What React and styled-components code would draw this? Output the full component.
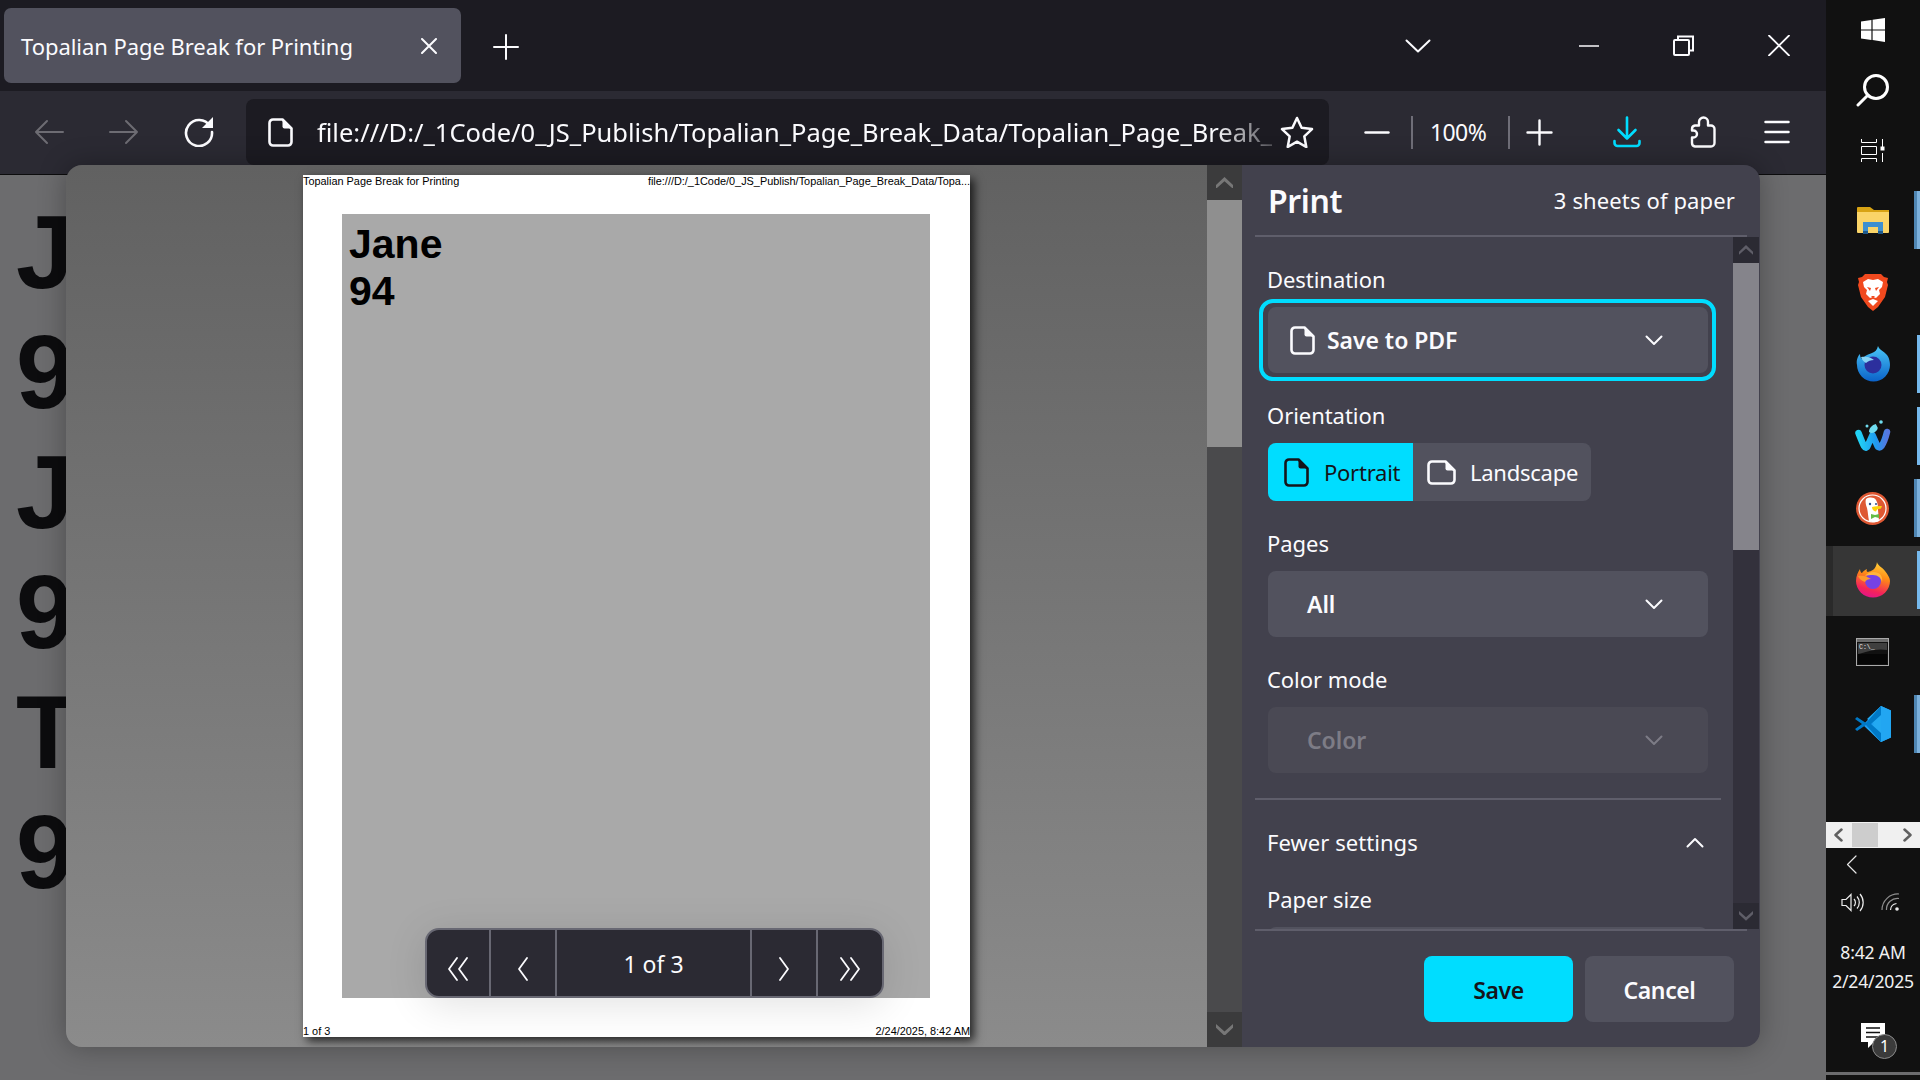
import React from "react";
import styled, { createGlobalStyle } from "styled-components";

const GlobalStyle = createGlobalStyle`
  html, body {
    margin: 0;
    width: 1920px;
    height: 1080px;
    overflow: hidden;
    background: #111111;
    font-family: "Noto Sans", "Open Sans", sans-serif;
  }
  * { box-sizing: border-box; }
  svg { display: block; flex: none; }
`;

const Screen = styled.div`
  width: 1920px;
  height: 1080px;
  display: flex;
`;

const Browser = styled.div`
  width: 1826px;
  display: flex;
  flex-direction: column;
`;

// tab strip
const TabBar = styled.div`
  height: 91px;
  background: #1c1b22;
  display: flex;
  align-items: center;
  padding-left: 4px;
`;

const Tab = styled.div`
  width: 457px;
  height: 75px;
  padding: 0 24px 0 17px;
  background: #52525e;
  border-radius: 7px;
  display: flex;
  align-items: center;
  justify-content: space-between;
  color: #fbfbfe;
  font-size: 22px;
  letter-spacing: -0.05px;
`;

const NewTab = styled.div`
  margin: 2px 0 0 32px;
`;

const WindowControls = styled.div`
  margin-left: auto;
  display: flex;
  align-items: center;
`;

const WindowButton = styled.div`
  width: 95px;
  display: flex;
  justify-content: center;
  margin-right: ${(p) => p.$gap || 0}px;
`;

// address bar row
const Toolbar = styled.div`
  height: 84px;
  background: #2b2a33;
  border-bottom: 1px solid #0c0c0d;
  display: flex;
  align-items: flex-start;
  padding: 8px 0 0 11px;
`;

const NavButton = styled.div`
  width: 75px;
  height: 66px;
  display: flex;
  align-items: center;
  justify-content: center;
`;

const UrlBar = styled.div`
  width: 1083px;
  height: 66px;
  margin-left: 10px;
  padding: 0 15px 0 22px;
  background: #1c1b22;
  border-radius: 8px;
  display: flex;
  align-items: center;
  color: #fbfbfe;
`;

const UrlText = styled.div`
  margin-left: 24px;
  font-size: 25.5px;
  white-space: nowrap;
  -webkit-mask-image: linear-gradient(to right, #000 94%, rgba(0, 0, 0, 0.25) 100%);
  mask-image: linear-gradient(to right, #000 94%, rgba(0, 0, 0, 0.25) 100%);
`;

const ToolItem = styled.div`
  height: 66px;
  margin-left: ${(p) => p.$gap}px;
  display: flex;
  align-items: center;
`;

const ZoomDivider = styled.div`
  width: 2px;
  height: 33px;
  margin-left: ${(p) => p.$gap}px;
  margin-top: 17px;
  background: #6f6e78;
`;

const ZoomValue = styled.div`
  width: 58px;
  margin-left: 17px;
  line-height: 66px;
  color: #fbfbfe;
  font-size: 23px;
  letter-spacing: -0.6px;
  white-space: nowrap;
`;

// page behind the print dialog
const Content = styled.div`
  position: relative;
  flex: 1;
  background: #6c6c6e;
  padding: 17px 0 0 16px;
`;

const BehindLine = styled.div`
  font: bold 104px/120px "Liberation Sans", Arial, sans-serif;
  color: #0c0c0e;
`;

const Dialog = styled.div`
  position: absolute;
  left: 66px;
  top: -10px;
  width: 1694px;
  height: 882px;
  border-radius: 16px;
  overflow: hidden;
  display: flex;
  box-shadow: 0 0 28px rgba(0, 0, 0, 0.3);
`;

const Preview = styled.div`
  position: relative;
  width: 1141px;
  padding: 10px 0 0 237px;
  background: linear-gradient(to bottom, #616161, #8b8b8b);
`;

const Sheet = styled.div`
  width: 667px;
  height: 862px;
  background: #ffffff;
  display: flex;
  flex-direction: column;
  box-shadow: 4px 4px 9px rgba(0, 0, 0, 0.75);
  font-family: "Liberation Sans", Arial, sans-serif;
  color: #000000;
`;

const SheetHead = styled.div`
  height: 39px;
  display: flex;
  justify-content: space-between;
  font-size: 10.9px;
  line-height: 12px;
`;

const SheetFoot = styled(SheetHead)`
  align-items: flex-end;
`;

const SheetBody = styled.div`
  width: 588px;
  height: 784px;
  margin-left: 39px;
  padding: 7px 0 0 7px;
  background: #a9a9a9;
  font-size: 41px;
  line-height: 47px;
  font-weight: bold;
`;

const Pager = styled.div`
  position: absolute;
  left: 359px;
  bottom: 49px;
  width: 459px;
  height: 70px;
  display: grid;
  grid-template-columns: 64px 66px 195px 66px 1fr;
  background: #2b2a33;
  border: 2px solid #686873;
  border-radius: 14px;
  box-shadow: 0 6px 40px rgba(0, 0, 0, 0.12);
  color: #fbfbfe;
`;

const PagerCell = styled.div`
  display: flex;
  align-items: center;
  justify-content: center;
  padding-top: ${(p) => (p.$label ? 2 : 12)}px;
  font-size: 23px;
  border-right: ${(p) => (p.$last ? "none" : "2px solid #686873")};
`;

const Track = styled.div`
  width: ${(p) => p.$width}px;
  display: flex;
  flex-direction: column;
  background: ${(p) => p.$track};
`;

const TrackButton = styled.div`
  height: ${(p) => p.$height}px;
  background: ${(p) => p.$bg};
  display: flex;
  align-items: center;
  justify-content: center;
`;

const TrackThumb = styled.div`
  height: ${(p) => p.$height}px;
  background: ${(p) => p.$bg};
`;

const TrackFill = styled.div`
  flex: 1;
`;

// settings panel
const Panel = styled.div`
  width: 518px;
  display: flex;
  flex-direction: column;
  background: #42414d;
  color: #fbfbfe;
`;

const PanelHead = styled.div`
  height: 72px;
  margin: 0 13px;
  padding: 0 12px 0 13px;
  border-bottom: 2px solid #5f5e6b;
  display: flex;
  align-items: center;
  justify-content: space-between;
`;

const Title = styled.div`
  font-size: 32px;
  font-weight: 600;
  letter-spacing: -0.4px;
`;

const SheetCount = styled.div`
  font-size: 22px;
  letter-spacing: 0.13px;
`;

const PanelMiddle = styled.div`
  height: 692px;
  display: flex;
  overflow: hidden;
`;

const Form = styled.div`
  width: 491px;
  padding-top: 27px;
`;

const Section = styled.div`
  padding-left: 26px;
  margin-bottom: 27px;
`;

const Label = styled.div`
  height: 32px;
  line-height: 30px;
  margin: 0 0 11px -1px;
  font-size: 22px;
  letter-spacing: -0.05px;
`;

const Select = styled.div`
  position: relative;
  width: 440px;
  height: 66px;
  padding: 0 45px 0 ${(p) => (p.$icon ? 22 : 39)}px;
  display: flex;
  align-items: center;
  background: ${(p) => (p.$disabled ? "#4a4954" : "#52525e")};
  color: ${(p) => (p.$disabled ? "#7d7c86" : "#fbfbfe")};
  border-radius: 8px;
  font-size: 23px;
  font-weight: 600;
  letter-spacing: -0.05px;
  &::after {
    content: ${(p) => (p.$focused ? '""' : "none")};
    position: absolute;
    inset: -8px -8px -8px -9px;
    border: 4px solid #00ddff;
    border-radius: 14px;
  }
`;

const SelectValue = styled.span`
  flex: 1;
  margin-left: ${(p) => (p.$icon ? 12 : 0)}px;
`;

const Segments = styled.div`
  display: flex;
  width: 323px;
  height: 58px;
  background: #52525e;
  border-radius: 8px;
  overflow: hidden;
`;

const Segment = styled.div`
  width: ${(p) => p.$width}px;
  padding-left: ${(p) => p.$pad}px;
  display: flex;
  align-items: center;
  gap: ${(p) => p.$gap}px;
  background: ${(p) => (p.$active ? "#00ddff" : "transparent")};
  color: ${(p) => (p.$active ? "#15141a" : "#fbfbfe")};
  font-size: 22px;
  letter-spacing: -0.25px;
`;

const Rule = styled.div`
  height: 2px;
  margin: -2px 12px 0 13px;
  background: #5f5e6b;
`;

const MoreRow = styled.div`
  height: 32px;
  margin: 26px 0;
  padding: 0 29px 0 25px;
  display: flex;
  align-items: center;
  justify-content: space-between;
  font-size: 22px;
  letter-spacing: 0.05px;
`;

const PanelFoot = styled.div`
  flex: 1;
  margin: 0 13px;
  padding: 25px 13px 0 0;
  border-top: 2px solid #5f5e6b;
  display: flex;
  justify-content: flex-end;
  gap: 12px;
`;

const FootButton = styled.div`
  width: 149px;
  height: 66px;
  padding-top: 2px;
  display: flex;
  align-items: center;
  justify-content: center;
  border-radius: 8px;
  background: ${(p) => (p.$primary ? "#00ddff" : "#52525e")};
  color: ${(p) => (p.$primary ? "#15141a" : "#fbfbfe")};
  font-size: 23px;
  font-weight: 600;
  letter-spacing: -0.4px;
`;

// windows taskbar on the right side
const Taskbar = styled.div`
  width: 94px;
  background: #111111;
  display: flex;
  flex-direction: column;
`;

const SystemSlot = styled.div`
  height: 60px;
  padding-right: 1px;
  display: flex;
  align-items: center;
  justify-content: center;
`;

const AppList = styled.div`
  margin-top: 4px;
`;

const AppSlot = styled.div`
  position: relative;
  height: 72px;
  display: flex;
  align-items: center;
  justify-content: center;
  padding-right: 1px;
  background: ${(p) =>
    p.$active
      ? "linear-gradient(to right, #2a2a2a 7px, #363636 7px) 0 2px / 100% 70px no-repeat"
      : "none"};
`;

const RunBar = styled.div`
  position: absolute;
  right: 0;
  top: 7px;
  height: 58px;
  width: ${(p) => (p.$wide ? 6 : 3)}px;
  background: ${(p) =>
    p.$wide
      ? "linear-gradient(to right, #4f86b3 50%, #7cb1dc 50%)"
      : "#76b9ed"};
`;

const MiniScroll = styled.div`
  position: relative;
  margin-top: 62px;
  height: 26px;
  padding: 0 8px;
  background: #f0f0f0;
  display: flex;
  align-items: center;
  justify-content: space-between;
`;

const MiniThumb = styled.div`
  position: absolute;
  left: 26px;
  top: 1px;
  width: 26px;
  height: 24px;
  background: #cdcdcd;
`;

const TrayCollapse = styled.div`
  margin: 7px 0 0 20px;
`;

const TrayIcons = styled.div`
  display: flex;
  gap: 17px;
  margin: 19px 0 0 15px;
`;

const Clock = styled.div`
  margin-top: 26px;
  text-align: center;
  color: #f0f0f0;
  font-size: 17.6px;
  line-height: 29px;
  letter-spacing: -0.2px;
`;

const Notice = styled.div`
  position: relative;
  width: 24px;
  margin: 27px 0 0 35px;
`;

const NoticeBadge = styled.div`
  position: absolute;
  left: 11px;
  top: 11px;
  width: 25px;
  height: 25px;
  border-radius: 50%;
  border: 1px solid #8a8a8a;
  background: #3b3b3b;
  color: #ffffff;
  font-size: 16px;
  line-height: 23px;
  text-align: center;
`;

const TaskbarEdge = styled.div`
  height: 3px;
  margin-top: auto;
  margin-bottom: 5px;
  background: #6c6c6e;
`;

const Line = ({ w, h, d, color = "#fbfbfe", sw = 2 }) => (
  <svg width={w} height={h} viewBox={`0 0 ${w} ${h}`} fill="none" stroke={color} strokeWidth={sw} strokeLinecap="round" strokeLinejoin="round">
    <path d={d} />
  </svg>
);

const FileIcon = ({ color = "#fbfbfe" }) => (
  <svg width="25" height="29" viewBox="0 0 25 29" fill="none">
    <path d="M5 1.5h9.5l9 9V24a3.5 3.5 0 0 1-3.5 3.5H5A3.5 3.5 0 0 1 1.5 24V5A3.5 3.5 0 0 1 5 1.5Z" stroke={color} strokeWidth="2.6" strokeLinejoin="round" />
    <path d="M14.5 1.5l9 9h-7a2 2 0 0 1-2-2Z" fill={color} />
  </svg>
);

const LandscapeIcon = () => (
  <svg width="29" height="25" viewBox="0 0 29 25" fill="none">
    <path d="M5 1.5h13.5l9 9V20a3.5 3.5 0 0 1-3.5 3.5H5A3.5 3.5 0 0 1 1.5 20V5A3.5 3.5 0 0 1 5 1.5Z" stroke="#fbfbfe" strokeWidth="2.6" strokeLinejoin="round" />
    <path d="M18.5 1.5l9 9h-7a2 2 0 0 1-2-2Z" fill="#fbfbfe" />
  </svg>
);

const Chevron = ({ up, color }) => (
  <Line w={18} h={11} color={color} d={up ? "M1.5 9.5L9 2l7.5 7.5" : "M1.5 1.5L9 9l7.5-7.5"} />
);

const ThickChevron = ({ up, color, w = 16 }) => (
  <svg width={w} height={w * 0.7} viewBox="0 0 16 11" fill={color}>
    <path d={up ? "M8 0l8 7.5V11L8 4 0 11V7.5Z" : "M8 11L0 3.5V0l8 7 8-7v3.5Z"} />
  </svg>
);

const WindowsLogo = () => (
  <svg width="24" height="24" viewBox="0 0 24 24" fill="#ffffff">
    <path d="M0 3.6L10.4 2v9.4H0ZM11.6 1.8L24 0v11.4H11.6ZM0 12.6h10.4V22L0 20.4ZM11.6 12.6H24V24l-12.4-1.9Z" />
  </svg>
);

const SearchIcon = () => (
  <svg width="33" height="33" viewBox="0 0 33 33" fill="none" stroke="#ffffff" strokeWidth="3" strokeLinecap="round">
    <circle cx="20" cy="13" r="11.5" />
    <path d="M12 21L2 31" />
  </svg>
);

const TaskViewIcon = () => (
  <svg width="24" height="23" viewBox="0 0 24 23" fill="none" stroke="#ffffff" strokeWidth="1">
    <path d="M0.5 3.5h15M0.5 0v3.5M15.5 0v3.5M0.5 7.5h15v8h-15ZM0.5 19.5h15M0.5 19.5v3.5M15.5 19.5v3.5M21.5 0v8M21.5 14v9" />
    <rect x="20" y="8" width="3" height="3" fill="#ffffff" />
  </svg>
);

const ExplorerLogo = () => (
  <svg width="32" height="27" viewBox="0 0 32 27">
    <path d="M1 0h12l4 3h15v8H0V1a1 1 0 0 1 1-1Z" fill="#d8a314" />
    <path d="M0 5h32v20a1 1 0 0 1-1 1H1a1 1 0 0 1-1-1Z" fill="#fad468" />
    <path d="M6 27V15h20v12h-5v-7H11v7Z" fill="#3d8fd0" />
    <path d="M6 24h5v3H6ZM21 24h5v3h-5Z" fill="#1f5a8c" />
  </svg>
);

const BraveLogo = () => (
  <svg width="30" height="37" viewBox="0 0 30 37">
    <path d="M7 0h16l3 3 4 1-1 4 1 3-3 12-7 10-5 4-5-4-7-10L0 11l1-3-1-4 4-1Z" fill="#f1491e" />
    <path d="M15 6l5-1 5 3-1 5-3 3 1 4-4 4-3-1-3 1-4-4 1-4-3-3-1-5 5-3Z" fill="#ffffff" />
    <path d="M9 13l4 1-1 3ZM21 13l-4 1 1 3ZM13 22h4l-2 2Z" fill="#f1491e" />
    <path d="M10 27l5-2 5 2-5 5Z" fill="#ffffff" />
  </svg>
);

const FirefoxDevLogo = () => (
  <svg width="34" height="36" viewBox="0 0 34 36">
    <defs>
      <linearGradient id="devBlue" x1="0" y1="0" x2="0" y2="1">
        <stop offset="0" stopColor="#49c6f7" />
        <stop offset="1" stopColor="#0b62c9" />
      </linearGradient>
    </defs>
    <path d="M22 0c1 4 6 5 9 9 3 4 3 9 3 10a16.5 16.5 0 0 1-33 0C0 14 2 10 4 8c0 3 1 4 2 5 2-3 7-5 10-6 3-1 5-3 6-7Z" fill="url(#devBlue)" />
    <circle cx="17" cy="19" r="8.5" fill="#2c2f9d" />
    <path d="M5 11c5-1 10 0 13 3-3 0-6 1-8 3-2-1-4-3-5-6Z" fill="#88d4f6" />
  </svg>
);

const WaterLogo = () => (
  <svg width="36" height="32" viewBox="0 0 36 32" fill="none">
    <defs>
      <linearGradient id="waterW" x1="0" y1="0" x2="1" y2="0">
        <stop offset="0" stopColor="#22d3f5" />
        <stop offset="0.6" stopColor="#1f9cf0" />
        <stop offset="1" stopColor="#5577e0" />
      </linearGradient>
    </defs>
    <path d="M3.5 13c2 5 3.5 9 5.5 13 1.5 2.5 3 2 4-1l4.5-10 4.5 10c1 3 3 3 4.5 1 2.5-3.5 4-8 5.5-14" stroke="url(#waterW)" strokeWidth="6.5" strokeLinecap="round" strokeLinejoin="round" />
    <path d="M14 12c0-4 3-7 7-8 0 2 3 3 1 6-2 3-6 4-8 2Z" fill="#6fdcf0" />
    <circle cx="26" cy="2" r="1.8" fill="#6fdcf0" />
    <circle cx="12" cy="6" r="1.5" fill="#6fdcf0" />
  </svg>
);

const DuckLogo = () => (
  <svg width="33" height="33" viewBox="0 0 33 33">
    <circle cx="16.5" cy="16.5" r="16.5" fill="#de5833" />
    <circle cx="16.5" cy="16.5" r="13.5" fill="none" stroke="#ffffff" strokeWidth="1.2" />
    <path d="M10 7c3-2 8-2 10 1 2 3 2 7 2 10l1 11c-4 2-8 1-10 0-1-5-1-9-2-13-1-3-2-6-1-9Z" fill="#ffffff" />
    <circle cx="14" cy="12" r="1.2" fill="#2d4f8e" />
    <circle cx="20" cy="12" r="1" fill="#2d4f8e" />
    <path d="M16 15c3-1 7-1 10-1l-1 2.5-4 1-1 2c-2 0-4-2-4-4.5Z" fill="#fdd20a" />
    <path d="M15 22l4 1 4-1v4l-4-1-4 2Z" fill="#65bc46" />
  </svg>
);

const FirefoxLogo = () => (
  <svg width="34" height="36" viewBox="0 0 34 36">
    <defs>
      <linearGradient id="foxBody" x1="0.7" y1="0" x2="0.4" y2="1">
        <stop offset="0" stopColor="#ffd43a" />
        <stop offset="0.4" stopColor="#ff8a16" />
        <stop offset="0.8" stopColor="#f4235a" />
        <stop offset="1" stopColor="#e31587" />
      </linearGradient>
    </defs>
    <path d="M21 0c0 3 5 5 8 9 3 4 5 7 5 10a17 16.5 0 0 1-34 0C0 14 2 10 4 7c0 2 1 4 2 4 1-2 3-3 5-4-1 2 0 3 1 3 3-1 8-2 9-10Z" fill="url(#foxBody)" />
    <circle cx="17" cy="19" r="8" fill="#7542e5" />
    <path d="M9 14c3-4 9-5 13-3 3 1 5 5 4 9-1-4-4-7-9-7-3 0-6 0-8 1Z" fill="#ffb53c" />
    <path d="M2 14c4-1 9 0 13 3-3 0-5 1-6 3-3-1-6-3-7-6Z" fill="#ff9a2b" />
  </svg>
);

const ConsoleLogo = () => (
  <svg width="33" height="28" viewBox="0 0 33 28">
    <rect x="0.5" y="0.5" width="32" height="27" fill="#111111" stroke="#a9a9a9" />
    <rect x="1" y="1" width="31" height="3" fill="#6c6c6c" />
    <path d="M2 5h29v7C20 10 10 14 2 16Z" fill="#3f3f3f" />
    <rect x="2" y="16" width="29" height="10" fill="#000000" opacity="0.6" />
    <text x="3" y="11" fontSize="6.5" fill="#e6e6e6" fontFamily="Liberation Mono, monospace">C:\_</text>
  </svg>
);

const VsCodeLogo = () => (
  <svg width="36" height="36" viewBox="0 0 36 36">
    <path d="M26 0l10 4.5v27L26 36 8 19l18-19Z" fill="#1f9cf0" />
    <path d="M26 0v36l-14-14 7-4-7-5Z" fill="#23a9f2" />
    <path d="M2 11l-2 2 7 5-7 5 2 2 9-6 15 17V27L16 18 26 9V0L11 17Z" fill="#0079c7" />
    <path d="M26 0l10 4.5v27L26 36Z" fill="#22a6f2" />
  </svg>
);

const apps = [
  { Logo: ExplorerLogo, wide: true },
  { Logo: BraveLogo },
  { Logo: FirefoxDevLogo, narrow: true },
  { Logo: WaterLogo, narrow: true },
  { Logo: DuckLogo, wide: true },
  { Logo: FirefoxLogo, narrow: true, active: true },
  { Logo: ConsoleLogo },
  { Logo: VsCodeLogo, wide: true },
];

const PAGE_URL = "file:///D:/_1Code/0_JS_Publish/Topalian_Page_Break_Data/Topalian_Page_Break_";

export default function App() {
  return (
    <Screen>
      <GlobalStyle />
      <Browser>
        <TabBar>
          <Tab>
            <span>Topalian Page Break for Printing</span>
            <Line w={16} h={16} d="M1 1l14 14M15 1L1 15" />
          </Tab>
          <NewTab>
            <Line w={26} h={26} d="M13 1v24M1 13h24" />
          </NewTab>
          <WindowControls>
            <WindowButton $gap={76}>
              <Line w={26} h={14} d="M1.5 1.5L13 12.5 24.5 1.5" />
            </WindowButton>
            <WindowButton>
              <Line w={20} h={2} d="M0 1h20" sw={1.5} />
            </WindowButton>
            <WindowButton>
              <svg width="22" height="21" viewBox="0 0 22 21" fill="none" stroke="#fbfbfe" strokeWidth="2">
                <rect x="1" y="5" width="15" height="15" rx="1" />
                <path d="M5 5V1.5h15v14h-4" />
              </svg>
            </WindowButton>
            <WindowButton>
              <Line w={22} h={21} d="M1 0.5L21 20.5M21 0.5L1 20.5" sw={1.8} />
            </WindowButton>
          </WindowControls>
        </TabBar>

        <Toolbar>
          <NavButton>
            <Line w={30} h={26} color="#6d6c73" d="M29 13H2M13 2L2 13l11 11" />
          </NavButton>
          <NavButton>
            <Line w={30} h={26} color="#6d6c73" d="M1 13h27M17 2l11 11-11 11" />
          </NavButton>
          <NavButton>
            <svg width="30" height="30" viewBox="0 0 30 30" fill="none">
              <path d="M26 9A13 13 0 1 0 28 15" stroke="#fbfbfe" strokeWidth="2.6" strokeLinecap="round" />
              <path d="M29 0v11H18Z" fill="#fbfbfe" />
            </svg>
          </NavButton>
          <UrlBar>
            <FileIcon />
            <UrlText>{PAGE_URL}</UrlText>
            <svg width="34" height="32" viewBox="0 0 34 32" fill="none" style={{ marginLeft: "auto" }}>
              <path d="M17 2l4.6 9.8 10.4 1.3-7.700 7.200 2 10.700L17 25.700 7.700 31l2-10.700L2 13.100l10.400-1.300Z" stroke="#fbfbfe" strokeWidth="2.5" strokeLinejoin="round" />
            </svg>
          </UrlBar>
          <ToolItem $gap={35}>
            <Line w={26} h={3} d="M1.5 1.5h23" sw={2.4} />
          </ToolItem>
          <ZoomDivider $gap={21} />
          <ZoomValue>100%</ZoomValue>
          <ZoomDivider $gap={20} />
          <ToolItem $gap={16}>
            <Line w={27} h={27} d="M13.5 1.5v24M1.5 13.5h24" sw={2.4} />
          </ToolItem>
          <ToolItem $gap={60}>
            <Line w={28} h={32} color="#00ddff" sw={2.6} d="M14 1.5v21M5.5 14l8.5 8.5L22.5 14M1.5 25v2a3 3 0 0 0 3 3h19a3 3 0 0 0 3-3v-2" />
          </ToolItem>
          <ToolItem $gap={49}>
            <Line w={26} h={32} sw={2.4} d="M9 9.5V6a4.500 4.500 0 0 1 9 0v3.500h2.500A3.500 3.500 0 0 1 24.500 13v14a3.500 3.500 0 0 1-3.500 3.500H5A3.500 3.500 0 0 1 2 27v-5.500h1.500a3.500 3.500 0 0 0 0-7H2V13a3.500 3.500 0 0 1 3-3.500Z" />
          </ToolItem>
          <ToolItem $gap={48}>
            <Line w={26} h={24} sw={2.5} d="M1.5 2h23M1.5 12h23M1.5 22h23" />
          </ToolItem>
        </Toolbar>

        <Content>
          {["J", "9", "J", "9", "T", "9"].map((ch, i) => (
            <BehindLine key={i}>{ch}</BehindLine>
          ))}

          <Dialog>
            <Preview>
              <Sheet>
                <SheetHead>
                  <span>Topalian Page Break for Printing</span>
                  <span>file:///D:/_1Code/0_JS_Publish/Topalian_Page_Break_Data/Topa...</span>
                </SheetHead>
                <SheetBody>
                  Jane
                  <br />
                  94
                </SheetBody>
                <SheetFoot>
                  <span>1 of 3</span>
                  <span>2/24/2025, 8:42 AM</span>
                </SheetFoot>
              </Sheet>
              <Pager>
                <PagerCell>
                  <Line w={22} h={24} sw={1.8} d="M10 1L2 12l8 11M20 1l-8 11 8 11" />
                </PagerCell>
                <PagerCell>
                  <Line w={12} h={24} sw={1.8} d="M10 1L2 12l8 11" />
                </PagerCell>
                <PagerCell $label>1 of 3</PagerCell>
                <PagerCell>
                  <Line w={12} h={24} sw={1.8} d="M2 1l8 11-8 11" />
                </PagerCell>
                <PagerCell $last>
                  <Line w={22} h={24} sw={1.8} d="M2 1l8 11-8 11M12 1l8 11-8 11" />
                </PagerCell>
              </Pager>
            </Preview>

            <Track $width={35} $track="#4a4a4c">
              <TrackButton $height={35} $bg="#3b3b3c">
                <ThickChevron up color="#777777" w={17} />
              </TrackButton>
              <TrackThumb $height={247} $bg="#8f8f8f" />
              <TrackFill />
              <TrackButton $height={35} $bg="#3b3b3c">
                <ThickChevron color="#777777" w={17} />
              </TrackButton>
            </Track>

            <Panel>
              <PanelHead>
                <Title>Print</Title>
                <SheetCount>3 sheets of paper</SheetCount>
              </PanelHead>

              <PanelMiddle>
                <Form>
                  <Section>
                    <Label>Destination</Label>
                    <Select $icon $focused>
                      <FileIcon />
                      <SelectValue $icon>Save to PDF</SelectValue>
                      <Chevron />
                    </Select>
                  </Section>
                  <Section>
                    <Label>Orientation</Label>
                    <Segments>
                      <Segment $active $width={145} $pad={16} $gap={15}>
                        <FileIcon color="#15141a" />
                        Portrait
                      </Segment>
                      <Segment $width={178} $pad={14} $gap={14}>
                        <LandscapeIcon />
                        Landscape
                      </Segment>
                    </Segments>
                  </Section>
                  <Section>
                    <Label>Pages</Label>
                    <Select>
                      <SelectValue>All</SelectValue>
                      <Chevron />
                    </Select>
                  </Section>
                  <Section>
                    <Label>Color mode</Label>
                    <Select $disabled>
                      <SelectValue>Color</SelectValue>
                      <Chevron color="#7d7c86" />
                    </Select>
                  </Section>
                  <Rule />
                  <MoreRow>
                    Fewer settings
                    <Chevron up />
                  </MoreRow>
                  <Section>
                    <Label>Paper size</Label>
                    <Select />
                  </Section>
                </Form>
                <Track $width={26} $track="#33313c">
                  <TrackButton $height={26} $bg="#2b2a33">
                    <ThickChevron up color="#5f5e68" w={14} />
                  </TrackButton>
                  <TrackThumb $height={287} $bg="#85848b" />
                  <TrackFill />
                  <TrackButton $height={26} $bg="#2b2a33">
                    <ThickChevron color="#5f5e68" w={14} />
                  </TrackButton>
                </Track>
              </PanelMiddle>

              <PanelFoot>
                <FootButton $primary>Save</FootButton>
                <FootButton>Cancel</FootButton>
              </PanelFoot>
            </Panel>
          </Dialog>
        </Content>
      </Browser>

      <Taskbar>
        <SystemSlot>
          <WindowsLogo />
        </SystemSlot>
        <SystemSlot>
          <SearchIcon />
        </SystemSlot>
        <SystemSlot>
          <TaskViewIcon />
        </SystemSlot>
        <AppList>
          {apps.map(({ Logo, wide, narrow, active }, i) => (
            <AppSlot key={i} $active={active}>
              <Logo />
              {(wide || narrow) && <RunBar $wide={wide} />}
            </AppSlot>
          ))}
        </AppList>
        <MiniScroll>
          <MiniThumb />
          <Line w={9} h={14} color="#606060" sw={2.5} d="M7.5 1.5L1.5 7l6 5.5" />
          <Line w={9} h={14} color="#606060" sw={2.5} d="M1.5 1.5L7.5 7l-6 5.5" />
        </MiniScroll>
        <TrayCollapse>
          <Line w={11} h={19} color="#e6e6e6" sw={1.2} d="M10 1L1.5 9.5 10 18" />
        </TrayCollapse>
        <TrayIcons>
          <svg width="23" height="19" viewBox="0 0 23 19" fill="none" stroke="#ededed" strokeWidth="1.2">
            <path d="M1 6.5h4L10 1.500v16l-5-5H1Z" />
            <path d="M13 6a5 5 0 0 1 0 7M16 3.5a9 9 0 0 1 0 12M19 1a13 13 0 0 1 0 17" />
          </svg>
          <svg width="19" height="18" viewBox="0 0 19 18" fill="none" stroke="#8f8f8f" strokeWidth="1.2">
            <path d="M1 17A16 16 0 0 1 18 1M5.5 17A11 11 0 0 1 18 5.5" />
            <path d="M9.5 17a7 7 0 0 1 6-6.5" stroke="#ededed" />
            <circle cx="16" cy="16" r="1.8" fill="#ededed" stroke="none" />
          </svg>
        </TrayIcons>
        <Clock>
          8:42 AM
          <br />
          2/24/2025
        </Clock>
        <Notice>
          <svg width="24" height="25" viewBox="0 0 24 25">
            <path d="M0 0h24v19H13l-6 6v-6H0Z" fill="#ffffff" />
            <path d="M5 5h14M5 9.5h14M5 14h14" stroke="#111111" strokeWidth="1.3" />
          </svg>
          <NoticeBadge>1</NoticeBadge>
        </Notice>
        <TaskbarEdge />
      </Taskbar>
    </Screen>
  );
}
